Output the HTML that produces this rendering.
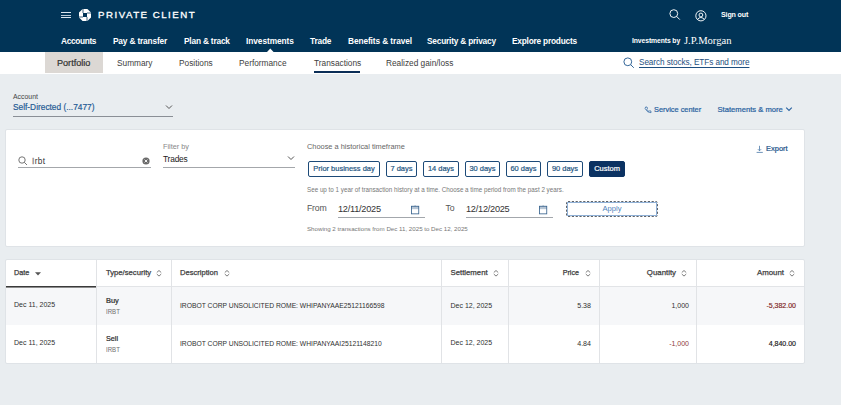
<!DOCTYPE html>
<html><head><meta charset="utf-8">
<style>
*{margin:0;padding:0;box-sizing:border-box}
html,body{width:841px;height:405px;overflow:hidden;background:#e9edf0;font-family:"Liberation Sans",sans-serif;color:#333}
.a{position:absolute;white-space:nowrap;line-height:1}
#hdr{position:absolute;left:0;top:0;width:841px;height:52px;background:#013457}
#sub{position:absolute;left:0;top:52px;width:841px;height:22px;background:#fff}
.nav{color:#fff;font-weight:700;font-size:8.3px;letter-spacing:-0.15px}
.sn{color:#404040;font-size:8.3px}
.card{position:absolute;background:#fff;border-radius:2px;border:1px solid #dfe3e7}
.btn{position:absolute;top:161px;height:16px;border:1.3px solid #1d4a78;border-radius:2px;color:#22547f;font-weight:400;-webkit-text-stroke:0.2px currentColor;font-size:7.48px;line-height:13.4px;text-align:center;white-space:nowrap}
.th{font-weight:400;font-size:7px;color:#3d3d3d;-webkit-text-stroke:0.25px #3d3d3d}
.sb{font-weight:400;-webkit-text-stroke:0.22px currentColor}
.td{font-size:7px;color:#303030}
.vl{position:absolute;width:1px;background:#e1e3e6}
</style></head><body>
<div id="hdr"></div>
<!-- hamburger -->
<div class="a" style="left:61px;top:12px;width:10px;height:1px;background:#dbe6f0"></div>
<div class="a" style="left:61px;top:14.5px;width:10px;height:1px;background:#b9c8d6"></div>
<div class="a" style="left:61px;top:17px;width:10px;height:1px;background:#dbe6f0"></div>
<!-- chase logo -->
<svg class="a" style="left:79px;top:9px" width="12" height="12" viewBox="0 0 12 12">
<path d="M3.6 0H8.4L12 3.6V8.4L8.4 12H3.6L0 8.4V3.6Z" fill="#fff"/>
<rect x="4" y="4" width="4" height="4" fill="#013457"/>
<path d="M4 0V4M8 4H12M8 8V12M0 8H4" stroke="#013457" stroke-width="0.75"/>
</svg>
<div class="a" style="left:98px;top:10.4px;font-size:9.7px;font-weight:400;-webkit-text-stroke:0.32px #fff;letter-spacing:1.5px;color:#fff">PRIVATE CLIENT</div>
<!-- right icons -->
<svg class="a" style="left:669px;top:9.3px" width="12" height="12" viewBox="0 0 12 12"><circle cx="4.8" cy="4.6" r="3.9" fill="none" stroke="#fff" stroke-width="0.95"/><line x1="7.6" y1="7.4" x2="10.8" y2="10.6" stroke="#fff" stroke-width="0.95"/></svg>
<svg class="a" style="left:695px;top:9.5px" width="12" height="12" viewBox="0 0 12 12"><circle cx="5.9" cy="5.8" r="5.1" fill="none" stroke="#fff" stroke-width="0.95"/><circle cx="5.9" cy="5" r="1.9" fill="none" stroke="#fff" stroke-width="0.95"/><path d="M2.5 9.6 Q3.6 7.5 5.9 7.5 Q8.2 7.5 9.3 9.6" fill="none" stroke="#fff" stroke-width="0.95"/></svg>
<div class="a nav" style="left:721px;top:11.6px;font-size:7.1px">Sign out</div>
<!-- nav -->
<div class="a nav" style="left:61px;top:37px;letter-spacing:-0.34px">Accounts</div>
<div class="a nav" style="left:113px;top:37px;letter-spacing:-0.16px">Pay &amp; transfer</div>
<div class="a nav" style="left:184px;top:37px;letter-spacing:-0.18px">Plan &amp; track</div>
<div class="a nav" style="left:246px;top:37px;letter-spacing:-0.05px">Investments</div>
<div class="a nav" style="left:310px;top:37px;letter-spacing:-0.19px">Trade</div>
<div class="a nav" style="left:348px;top:37px;letter-spacing:-0.09px">Benefits &amp; travel</div>
<div class="a nav" style="left:427px;top:37px;letter-spacing:-0.20px">Security &amp; privacy</div>
<div class="a nav" style="left:512px;top:37px;letter-spacing:-0.21px">Explore products</div>
<div class="a nav" style="left:632px;top:37.5px;font-size:6.8px;letter-spacing:-0.1px">Investments by</div>
<div class="a" style="left:684px;top:35.5px;font-family:'Liberation Serif',serif;font-size:10.6px;color:#fff">J.P.Morgan</div>
<!-- notch -->
<svg class="a" style="left:266.6px;top:48px" width="7" height="4" viewBox="0 0 7 4"><path d="M0 4 L3.3 0.4 L6.6 4Z" fill="#fff"/></svg>
<!-- subnav -->
<div id="sub"></div>
<div class="a" style="left:45px;top:52px;width:58px;height:21px;background:#dcd8d4"></div>
<div class="a sn sb" style="left:57px;top:58.5px;font-size:9.1px;color:#333">Portfolio</div>
<div class="a sn" style="left:117px;top:59px">Summary</div>
<div class="a sn" style="left:179px;top:59px">Positions</div>
<div class="a sn" style="left:239px;top:59px">Performance</div>
<div class="a sn" style="left:314px;top:59px">Transactions</div>
<div class="a" style="left:314px;top:71px;width:46px;height:2px;background:#0b2e57"></div>
<div class="a sn" style="left:386px;top:59px">Realized gain/loss</div>
<svg class="a" style="left:623px;top:57px" width="12" height="12" viewBox="0 0 12 12"><circle cx="4.8" cy="4.8" r="3.9" fill="none" stroke="#2a5f94" stroke-width="0.95"/><line x1="7.7" y1="7.7" x2="10.8" y2="10.8" stroke="#2a5f94" stroke-width="0.95"/></svg>
<div class="a" style="left:639px;top:58.8px;font-size:8.2px;letter-spacing:-0.07px;color:#1e4f80;text-decoration:underline;text-underline-offset:1.5px">Search stocks, ETFs and more</div>

<!-- account -->
<div class="a" style="left:13px;top:93.8px;font-size:6.9px;color:#444">Account</div>
<div class="a" style="left:13px;top:103px;font-size:8.33px;color:#1e5a94;-webkit-text-stroke:0.18px #1e5a94">Self-Directed (...7477)</div>
<div class="a" style="left:13px;top:116px;width:160px;height:1px;background:#8a8f96"></div>
<svg class="a" style="left:165px;top:104px" width="8" height="6" viewBox="0 0 8 6"><path d="M1 1.5 L4 4.5 L7 1.5" fill="none" stroke="#555" stroke-width="1"/></svg>
<svg class="a" style="left:644px;top:105.5px" width="8" height="8" viewBox="0 0 8 8"><path d="M1.6 1 L3 1 L3.5 2.5 L2.7 3.2 Q3.7 5 5 5.5 L5.6 4.7 L7 5.2 L7 6.7 Q3.4 7 1.1 2.6Z" fill="none" stroke="#3a6fa8" stroke-width="0.8"/></svg>
<div class="a sb" style="left:654px;top:105.8px;font-size:7.38px;color:#2a62a0">Service center</div>
<div class="a sb" style="left:717.5px;top:105.8px;font-size:7.63px;color:#2a62a0">Statements &amp; more</div>
<svg class="a" style="left:785px;top:106px" width="8" height="6" viewBox="0 0 8 6"><path d="M1.2 1.6 L4 4.4 L6.8 1.6" fill="none" stroke="#2a62a0" stroke-width="1.1"/></svg>

<!-- filter card -->
<div class="card" style="left:5px;top:129px;width:800px;height:118px"></div>
<svg class="a" style="left:18px;top:156px" width="10" height="10" viewBox="0 0 10 10"><circle cx="4" cy="4" r="3.2" fill="none" stroke="#666" stroke-width="0.9"/><line x1="6.3" y1="6.3" x2="9" y2="9" stroke="#666" stroke-width="0.9"/></svg>
<div class="a" style="left:32px;top:157px;font-size:8.3px;letter-spacing:0.35px;color:#333"><span style="color:#8a8a8a;-webkit-text-stroke:0.4px #8a8a8a">I</span>rbt</div>
<svg class="a" style="left:142px;top:157px" width="8" height="8" viewBox="0 0 8 8"><circle cx="4" cy="4" r="3.6" fill="#6a6a6a"/><path d="M2.6 2.6 L5.4 5.4 M5.4 2.6 L2.6 5.4" stroke="#fff" stroke-width="0.9"/></svg>
<div class="a" style="left:18px;top:167px;width:133px;height:1px;background:#a4a7ab"></div>

<div class="a" style="left:163px;top:142.7px;font-size:7.3px;color:#888">Filter by</div>
<div class="a" style="left:163px;top:154.5px;font-size:8.4px;letter-spacing:-0.2px;color:#222">Trades</div>
<div class="a" style="left:163px;top:167px;width:132px;height:1px;background:#a4a7ab"></div>
<svg class="a" style="left:287px;top:155px" width="8" height="6" viewBox="0 0 8 6"><path d="M1 1.5 L4 4.5 L7 1.5" fill="none" stroke="#555" stroke-width="1"/></svg>

<div class="a" style="left:307px;top:143px;font-size:7.4px;color:#666">Choose a historical timeframe</div>
<div class="btn" style="left:308px;width:72px">Prior business day</div>
<div class="btn" style="left:386px;width:31px">7 days</div>
<div class="btn" style="left:423px;width:36px">14 days</div>
<div class="btn" style="left:465px;width:35px">30 days</div>
<div class="btn" style="left:506px;width:35px">60 days</div>
<div class="btn" style="left:547px;width:36px">90 days</div>
<div class="btn" style="left:589px;width:36px;background:#0b3262;border-color:#0b3262;color:#fff">Custom</div>
<div class="a" style="left:307px;top:187px;font-size:6.27px;color:#777">See up to 1 year of transaction history at a time. Choose a time period from the past 2 years.</div>

<div class="a" style="left:307px;top:203.6px;font-size:8.7px;letter-spacing:-0.2px;color:#555">From</div>
<div class="a" style="left:338px;top:204.5px;font-size:9.2px;letter-spacing:-0.25px;color:#333">12/11/2025</div>
<div class="a" style="left:338px;top:217px;width:87px;height:1px;background:#a3a7ac"></div>
<svg class="a" style="left:410px;top:205px" width="10" height="10" viewBox="0 0 10 10"><rect x="1.45" y="1.25" width="7.3" height="7.6" fill="none" stroke="#3b6690" stroke-width="0.85"/><rect x="1.45" y="1.25" width="7.3" height="2.9" fill="#2f5a86" fill-opacity="0.35"/><line x1="5.1" y1="0.4" x2="5.1" y2="1.3" stroke="#2f5a86" stroke-width="0.6"/></svg>
<div class="a" style="left:445.5px;top:203.6px;font-size:8.7px;letter-spacing:-0.2px;color:#555">To</div>
<div class="a" style="left:466px;top:204.5px;font-size:9.2px;letter-spacing:-0.25px;color:#333">12/12/2025</div>
<div class="a" style="left:466px;top:217px;width:87px;height:1px;background:#a3a7ac"></div>
<svg class="a" style="left:538px;top:205px" width="10" height="10" viewBox="0 0 10 10"><rect x="1.45" y="1.25" width="7.3" height="7.6" fill="none" stroke="#3b6690" stroke-width="0.85"/><rect x="1.45" y="1.25" width="7.3" height="2.9" fill="#2f5a86" fill-opacity="0.35"/><line x1="5.1" y1="0.4" x2="5.1" y2="1.3" stroke="#2f5a86" stroke-width="0.6"/></svg>
<svg class="a" style="left:566px;top:201px" width="92" height="16" viewBox="0 0 92 16"><rect x="0.5" y="0.5" width="91" height="15" rx="1.5" fill="#fff" stroke="#5f6368" stroke-width="1" stroke-dasharray="2.2 1.6"/><rect x="1.5" y="1.5" width="89" height="13" fill="none" stroke="#8fb0d6" stroke-width="1"/></svg>
<div class="a" style="left:566px;top:205px;width:92px;font-size:7.6px;color:#4f83bb;text-align:center">Apply</div>
<div class="a" style="left:307px;top:226px;font-size:6.17px;color:#777">Showing 2 transactions from Dec 11, 2025 to Dec 12, 2025</div>

<svg class="a" style="left:756px;top:144.5px" width="8" height="9" viewBox="0 0 8 9"><path d="M3.5 0.8 L3.5 5.6 M1.9 4.2 L3.5 5.8 L5.1 4.2 M0.6 7.4 L6.8 7.4" fill="none" stroke="#4a78a8" stroke-width="0.8"/></svg>
<div class="a sb" style="left:766px;top:144.8px;font-size:7.5px;color:#22548a">Export</div>

<!-- table -->
<div class="card" style="left:5px;top:259px;width:800px;height:105px"></div>
<div class="a" style="left:6px;top:286px;width:798px;height:39px;background:#f6f7f9"></div>
<div class="a" style="left:6px;top:286px;width:798px;height:1px;background:#e2e4e7"></div>
<div class="a" style="left:6px;top:286px;width:90px;height:1px;background:#3a3a3a"></div><div class="a" style="left:6px;top:287px;width:90px;height:1px;background:#8c8c8c"></div>
<div class="vl" style="left:96px;top:260px;height:103px"></div>
<div class="vl" style="left:171px;top:260px;height:103px"></div>
<div class="vl" style="left:441px;top:260px;height:103px"></div>
<div class="vl" style="left:508px;top:260px;height:103px"></div>
<div class="vl" style="left:599px;top:260px;height:103px"></div>
<div class="vl" style="left:696px;top:260px;height:103px"></div>

<div class="a th" style="left:14px;top:269px;font-size:7.3px">Date</div>
<svg class="a" style="left:35px;top:271.5px" width="6" height="4" viewBox="0 0 6 4"><path d="M0 0.2 L6 0.2 L3 3.4Z" fill="#555"/></svg>
<div class="a th" style="left:106px;top:269px;font-size:7.66px">Type/security</div>
<div class="a th" style="left:180px;top:269px;font-size:7.58px">Description</div>
<div class="a th" style="left:450.5px;top:269px;font-size:7.78px">Settlement</div>
<div class="a th" style="right:262px;top:270px;font-size:7.15px">Price</div>
<div class="a th" style="right:165px;top:269px;font-size:7.84px">Quantity</div>
<div class="a th" style="right:57px;top:269px;font-size:7.83px">Amount</div>
<svg class="a" style="left:156.3px;top:269.8px" width="6" height="7" viewBox="0 0 6 7"><path d="M0.8 2.5 L3 0.5 L5.2 2.5 M0.8 4.1 L3 6.1 L5.2 4.1" fill="none" stroke="#5a5a5a" stroke-width="0.8"/></svg>
<svg class="a" style="left:224px;top:269.8px" width="6" height="7" viewBox="0 0 6 7"><path d="M0.8 2.5 L3 0.5 L5.2 2.5 M0.8 4.1 L3 6.1 L5.2 4.1" fill="none" stroke="#5a5a5a" stroke-width="0.8"/></svg>
<svg class="a" style="left:492.5px;top:269.8px" width="6" height="7" viewBox="0 0 6 7"><path d="M0.8 2.5 L3 0.5 L5.2 2.5 M0.8 4.1 L3 6.1 L5.2 4.1" fill="none" stroke="#5a5a5a" stroke-width="0.8"/></svg>
<svg class="a" style="left:584.5px;top:269.8px" width="6" height="7" viewBox="0 0 6 7"><path d="M0.8 2.5 L3 0.5 L5.2 2.5 M0.8 4.1 L3 6.1 L5.2 4.1" fill="none" stroke="#5a5a5a" stroke-width="0.8"/></svg>
<svg class="a" style="left:681.3px;top:269.8px" width="6" height="7" viewBox="0 0 6 7"><path d="M0.8 2.5 L3 0.5 L5.2 2.5 M0.8 4.1 L3 6.1 L5.2 4.1" fill="none" stroke="#5a5a5a" stroke-width="0.8"/></svg>
<svg class="a" style="left:789px;top:269.8px" width="6" height="7" viewBox="0 0 6 7"><path d="M0.8 2.5 L3 0.5 L5.2 2.5 M0.8 4.1 L3 6.1 L5.2 4.1" fill="none" stroke="#5a5a5a" stroke-width="0.8"/></svg>

<div class="a td" style="left:14px;top:300.5px">Dec 11, 2025</div>
<div class="a td sb" style="left:106px;top:297px;font-size:7.43px;color:#2b2b2b">Buy</div>
<div class="a td" style="left:106px;top:308px;font-size:7px;transform:scaleX(0.87);transform-origin:0 0;color:#6e6e6e">IRBT</div>
<div class="a td" style="left:180px;top:303px;font-size:6.74px">IROBOT CORP UNSOLICITED ROME: WHIPANYAAE25121166598</div>
<div class="a td" style="left:450.5px;top:302px">Dec 12, 2025</div>
<div class="a td" style="right:250px;top:303px;font-size:7.09px">5.38</div>
<div class="a td" style="right:152px;top:302px">1,000</div>
<div class="a td" style="right:45px;top:302px;color:#7d2222;-webkit-text-stroke:0.15px #7d2222">-5,382.00</div>

<div class="a td" style="left:14px;top:338.5px">Dec 11, 2025</div>
<div class="a td sb" style="left:106px;top:335px;font-size:7.2px;color:#2b2b2b">Sell</div>
<div class="a td" style="left:106px;top:346px;font-size:7px;transform:scaleX(0.87);transform-origin:0 0;color:#6e6e6e">IRBT</div>
<div class="a td" style="left:180px;top:341px;font-size:6.74px">IROBOT CORP UNSOLICITED ROME: WHIPANYAAI25121148210</div>
<div class="a td" style="left:450.5px;top:339px">Dec 12, 2025</div>
<div class="a td" style="right:250px;top:341px;font-size:7.09px">4.84</div>
<div class="a td" style="right:152px;top:340px;color:#8c3b3b">-1,000</div>
<div class="a td" style="right:45px;top:340px;color:#151515;-webkit-text-stroke:0.15px #151515">4,840.00</div>
</body></html>
